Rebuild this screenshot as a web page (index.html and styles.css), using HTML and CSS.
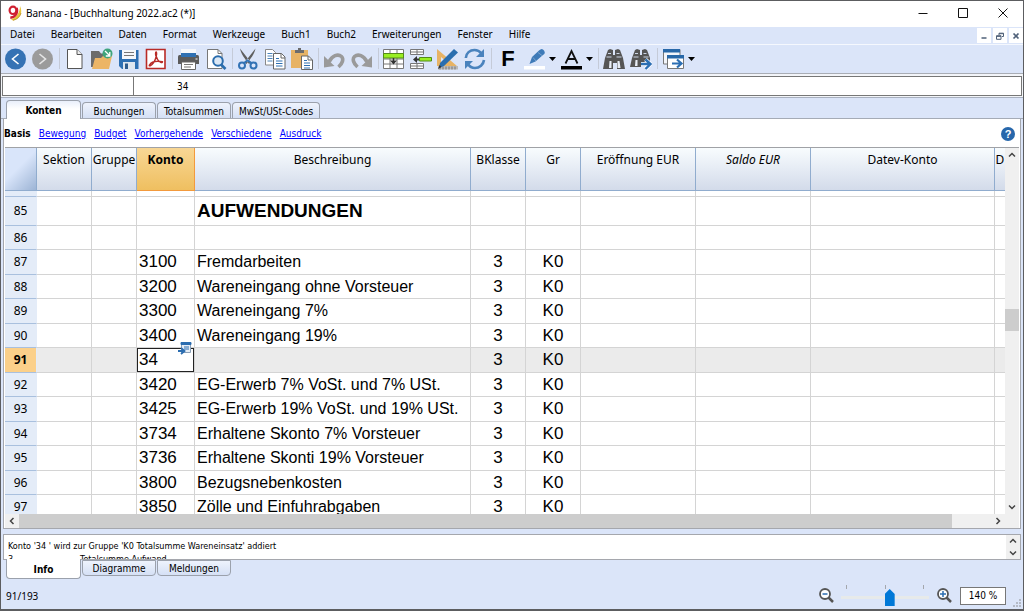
FILE: index.html
```html
<!DOCTYPE html>
<html lang="de">
<head>
<meta charset="utf-8">
<title>Banana - [Buchhaltung 2022.ac2 (*)]</title>
<link rel="stylesheet" href="styles.css">
</head>
<body>
<div class="window">
  <header class="titlebar">
    <svg class="logo" viewBox="0 0 14 16"><path d="M12 1c3 6 .5 12.500-7 14.500l-2-1C9 12 12 7 12 1z" fill="#e8c63c"/><path d="M13 8c-1 4-4 6.500-8 7.300" fill="none" stroke="#b58a1e" stroke-width=".8"/><ellipse cx="5" cy="5.300" rx="3.400" ry="3.700" fill="#fff" stroke="#cf2030" stroke-width="2.200"/><path d="M8.600 3c1.600 4.500-1 9.300-6.300 9.800" fill="none" stroke="#cf2030" stroke-width="2.400"/></svg>
    <h1 class="title">Banana - [Buchhaltung 2022.ac2 (*)]</h1>
    <div class="window-controls">
      <button type="button" aria-label="Minimieren"><svg viewBox="0 0 10 10"><path d="M.5 5.500h9"/></svg></button>
      <button type="button" aria-label="Maximieren"><svg viewBox="0 0 10 10"><path d="M.5.5h9v9h-9z"/></svg></button>
      <button type="button" aria-label="Schliessen"><svg viewBox="0 0 10 10"><path d="M.5.5l9 9M9.500.5l-9 9"/></svg></button>
    </div>
  </header>

  <nav class="menubar">
    <button type="button">Datei</button>
    <button type="button">Bearbeiten</button>
    <button type="button">Daten</button>
    <button type="button">Format</button>
    <button type="button">Werkzeuge</button>
    <button type="button">Buch1</button>
    <button type="button">Buch2</button>
    <button type="button">Erweiterungen</button>
    <button type="button">Fenster</button>
    <button type="button">Hilfe</button>
    <div class="document-controls">
      <button type="button" aria-label="Dokument minimieren"><svg viewBox="0 0 8 8"><path d="M1.500 6h5" stroke-width="1.500"/></svg></button>
      <button type="button" aria-label="Dokument wiederherstellen"><svg viewBox="0 0 8 8"><path d="M3 3V1.200h4.500v3.300H6M3 1.700h4.500M.5 3.700H5v3.600H.5zM.5 4.400H5"/></svg></button>
      <button type="button" aria-label="Dokument schliessen"><svg viewBox="0 0 8 8"><path d="M1.500 1.500l5 5M6.500 1.500l-5 5" stroke-width="1.700"/></svg></button>
    </div>
  </nav>

  <div class="toolbar" role="toolbar">
    <div class="tool-group">
      <button type="button" aria-label="Zurück"><svg viewBox="0 0 22 22"><circle cx="10.500" cy="11" r="10.500" fill="#3572b4"/><path d="M13.500 6l-6 5 6 5" fill="none" stroke="#fff" stroke-width="1.600"/></svg></button>
      <button type="button" aria-label="Vorwärts"><svg viewBox="0 0 22 22"><circle cx="10.500" cy="11" r="10.500" fill="#9b9b9b"/><path d="M7.500 6l6 5-6 5" fill="none" stroke="#e6e6e6" stroke-width="1.600"/></svg></button>
    </div>
    <div class="tool-group">
      <button type="button" aria-label="Neu"><svg viewBox="0 0 22 22"><path d="M3.500 1.500H13l5 5v14H3.500z" fill="#fff" stroke="#555"/><path d="M13 1.500v5h5" fill="#eee" stroke="#555"/></svg></button>
      <button type="button" aria-label="Öffnen"><svg viewBox="0 0 22 22"><path d="M0 19V3h8l2 2.500h7V19z" fill="#6b6b6b"/><path d="M1 21l3-11h6l2-2h9l-3 13z" fill="#ecb566"/><circle cx="16.500" cy="5.500" r="5" fill="#3fa47c"/><path d="M14 3l4.500 4.500M18.800 4v4h-4" stroke="#fff" stroke-width="1.300" fill="none"/></svg></button>
      <button type="button" aria-label="Speichern"><svg viewBox="0 0 22 22"><path d="M1 2h19.500v19H4l-3-3z" fill="#2e70b2"/><path d="M4 2h14v9H4z" fill="#f5f8fb"/><path d="M6 4.500h10M6 7.500h10" stroke="#777"/><path d="M5 14h12v7H5z" fill="#dfe7ef"/><path d="M7 15.500h3V21H7z" fill="#2e5c8c"/></svg></button>
      <button type="button" aria-label="PDF"><svg viewBox="0 0 22 22"><path d="M1.500 1.500h18.500v19H1.500z" fill="#fff" stroke="#b92b27" stroke-width="1.600"/><path d="M4.500 17c2-3.500 6-4.500 13-3.200 0 1.500-3 .5-5-2.500-1.500-2.500-2.300-5-1.800-7 .6-1 1.500.5.5 4-1 4-3.500 8.200-6 9.500-1 .3-1.200-.2-.7-.8z" fill="none" stroke="#b92b27" stroke-width="1.400"/></svg></button>
    </div>
    <div class="tool-group">
      <button type="button" aria-label="Drucken"><svg viewBox="0 0 22 22"><path d="M0 8.500Q0 7 1.500 7h18Q21 7 21 8.500V16H0z" fill="#5b5b5b"/><path d="M3 1h15v8H3z" fill="#f6f8fb"/><path d="M3 5h15v4H3z" fill="#2e70b2"/><path d="M3.500 14h14v7.500h-14z" fill="#fff" stroke="#666"/><path d="M6 16.500h9M6 19h7" stroke="#777"/><path d="M17.500 11h2" stroke="#fff"/></svg></button>
      <button type="button" aria-label="Vorschau"><svg viewBox="0 0 22 22"><path d="M2.500 1.500H13l4 4v15H2.500z" fill="#fff" stroke="#777"/><path d="M13 1.500v4h4" fill="none" stroke="#777"/><circle cx="13" cy="13" r="4.800" fill="#dce8f5" stroke="#2b6dad" stroke-width="2"/><path d="M16 16.500l4.500 4.500" stroke="#2b6dad" stroke-width="2.600"/></svg></button>
    </div>
    <div class="tool-group">
      <button type="button" aria-label="Ausschneiden"><svg viewBox="0 0 22 22"><path d="M3 .5l11 14-2 1.500C8 11 4 6 3 .5zM18.500.5l-11 14 2 1.500c4-5 8-10 9-15.500z" fill="#5f5f5f"/><circle cx="5" cy="17.500" r="3" fill="none" stroke="#3373b5" stroke-width="2"/><circle cx="16.500" cy="17.500" r="3" fill="none" stroke="#3373b5" stroke-width="2"/><path d="M7 15l3.500-2.500L14.500 15" fill="none" stroke="#3373b5" stroke-width="2"/></svg></button>
      <button type="button" aria-label="Kopieren"><svg viewBox="0 0 22 22"><path d="M1.500 1.500h7l3 3V17h-10z" fill="#fff" stroke="#888"/><path d="M3.500 5.500h5M3.500 8h5M3.500 10.500h5M3.500 13h5" stroke="#4d84ba"/><path d="M9.500 5.500h8l3.500 3.500v12H9.500z" fill="#fff" stroke="#666"/><path d="M17 5.500V10h4" fill="none" stroke="#666"/><path d="M12 10.500h3M12 13h6.500M12 15.500h6.500M12 18h6.500" stroke="#2e70b2"/></svg></button>
      <button type="button" aria-label="Einfügen"><svg viewBox="0 0 22 22"><path d="M0 2h17v18H0z" fill="#e7b365"/><path d="M4 5V2h3V0h3v2h3v3z" fill="#6c6c6c"/><path d="M10.500 8h7l4 4v9.500h-11z" fill="#fff" stroke="#666"/><path d="M17 8v4h4" fill="none" stroke="#666"/><path d="M13 12.500h3M13 15h6M13 17.500h6M13 20h6" stroke="#2e70b2"/></svg></button>
    </div>
    <div class="tool-group">
      <button type="button" aria-label="Rückgängig"><svg viewBox="0 0 22 22"><path d="M5 14C8 7.500 14 5.500 17.500 8.500c2.500 2.500 1 7-3 10.500" fill="none" stroke="#9a9a9a" stroke-width="3.600"/><path d="M0 8l0 11.500 10.500-1.500z" fill="#9a9a9a"/></svg></button>
      <button type="button" aria-label="Wiederholen"><svg viewBox="0 0 22 22"><path d="M16 14C13 7.500 7 5.500 3.500 8.500c-2.500 2.500-1 7 3 10.500" fill="none" stroke="#9a9a9a" stroke-width="3.600"/><path d="M21 8l0 11.500-10.500-1.500z" fill="#9a9a9a"/></svg></button>
    </div>
    <div class="tool-group">
      <button type="button" aria-label="Zeilen einfügen"><svg viewBox="0 0 22 22"><path d="M.5 1.500h20v19H.5zM.5 11h20M.5 16h20M7 1.500v19M14 1.500v19" fill="#fff" stroke="#777"/><path d="M.5 5.500h20V10H.5z" fill="#99ee22" stroke="#538c18"/><path d="M10.500 10v4" stroke="#333" stroke-width="1.500"/><path d="M7 12.500h7l-3.500 4z" fill="#333"/></svg></button>
      <button type="button" aria-label="Zeilen hinzufügen"><svg viewBox="0 0 22 22"><path d="M.5 1.500h13v5H.5zM.5 15.500h13v5H.5zM.5 4h13M.5 18h13M7 1.500v5M7 15.500v5" fill="#fff" stroke="#777"/><path d="M9.500 9.500h12v3.500h-12z" fill="#99ee22" stroke="#538c18"/><path d="M3 11.500l4-3.500v2.500h2v2H7V15z" fill="#333"/></svg></button>
      <button type="button" aria-label="Zeichnen"><svg viewBox="0 0 22 22"><path d="M0 1l20 17H0zM4 9v5h6z" fill="#e7b365" fill-rule="evenodd"/><path d="M1 18h20v3.500H1z" fill="#bbb"/><path d="M3 18.500v3M6 18.500v3M9 18.500v3M12 18.500v3M15 18.500v3M18 18.500v3" stroke="#777"/><path d="M17 1l4 3.500L7 18l-5 2 1-5z" fill="#296eaf"/><path d="M1 21l1.500-4 2 2z" fill="#333"/></svg></button>
      <button type="button" aria-label="Neu berechnen"><svg viewBox="0 0 22 22"><path d="M1.800 10C2 5 6 2 10.500 2c3 0 5 1 7 3.500M20 12c-.5 4.500-4.500 8-9 8-3 0-5.500-1.500-7-4" fill="none" stroke="#4a83bd" stroke-width="2.600"/><path d="M20 1v8h-8zM1 21v-8h8z" fill="#4a83bd"/></svg></button>
    </div>
    <div class="tool-group">
      <button type="button" aria-label="Fett" class="bold-tool">F</button>
      <button type="button" aria-label="Hintergrundfarbe" class="split-tool"><svg viewBox="0 0 22 22"><path d="M0 18h21v3.500H0z" fill="#fff"/><path d="M5.500 16L8 9l7-6.500q3-3 5 0T19 7l-7.500 6.500z" fill="#3f7bb8"/><path d="M9 9.500l3 3.500M14 4.500l4 3" stroke="#88abd0" stroke-width=".8"/></svg><svg class="caret" viewBox="0 0 7 4"><path d="M0 0h7L3.500 4z"/></svg></button>
      <button type="button" aria-label="Textfarbe" class="split-tool"><svg viewBox="0 0 22 22"><path d="M0 18h21v3.500H0z" fill="#000"/><path d="M4.500 15.500L10.500 3l6 12.500M6.700 11h7.600" fill="none" stroke="#111" stroke-width="1.800"/></svg><svg class="caret" viewBox="0 0 7 4"><path d="M0 0h7L3.500 4z"/></svg></button>
    </div>
    <div class="tool-group">
      <button type="button" aria-label="Suchen"><svg viewBox="0 0 22 22"><path d="M0 21l2-11 3-8 2-1 3 1v5h2V2l3-1 2 1 3 8 2 11h-8v-6h-4v6z" fill="#555"/><path d="M5 5.500h3M13.500 5.500h3M3.500 9h5M13.500 9h5" stroke="#ccd5e5"/><path d="M6.500 13h2v7H6zM14.500 13h2l1 7h-3z" fill="#e8edf5"/></svg></button>
      <button type="button" aria-label="Weitersuchen"><svg viewBox="0 0 22 22"><path d="M0 19l2-9 3-8 2-1 3 1v5h2V2l3-1 2 1 3 8v5h-9v4z" fill="#555"/><path d="M5 5.500h3M13.500 5.500h3M3.500 9h5M13.500 9h5" stroke="#ccd5e5"/><path d="M5.500 12h2v6H5z" fill="#e8edf5"/><path d="M11 16h9M15.500 11.500l5 4.500-5 5" fill="none" stroke="#fff" stroke-width="4"/><path d="M11 16h9M15.500 11.500l5 4.500-5 5" fill="none" stroke="#2c6fb3" stroke-width="2.400"/></svg></button>
    </div>
    <div class="tool-group">
      <button type="button" aria-label="Fenster wechseln" class="split-tool"><svg viewBox="0 0 22 22"><path d="M.5 1.500H17V16H.5z" fill="#f2f5fa" stroke="#777"/><path d="M0 1h17v3.500H0z" fill="#2868a8"/><path d="M4.500 7.500h16v13h-16z" fill="#fff" stroke="#777"/><path d="M4 7h17v3.500H4z" fill="#2868a8"/><path d="M9 15.500h9M14 11.500l4.500 4-4.500 4" fill="none" stroke="#2c6fb3" stroke-width="2.200"/></svg><svg class="caret" viewBox="0 0 7 4"><path d="M0 0h7L3.500 4z"/></svg></button>
    </div>
  </div>

  <div class="formula-bar">
    <input class="cell-reference" type="text" aria-label="Zelle">
    <input class="cell-content" type="text" aria-label="Inhalt" value="34">
  </div>

  <div class="tabs tabs--top" role="tablist">
    <button type="button" role="tab" aria-selected="true" class="tab tab--active">Konten</button>
    <button type="button" role="tab" class="tab">Buchungen</button>
    <button type="button" role="tab" class="tab">Totalsummen</button>
    <button type="button" role="tab" class="tab tab--wide">MwSt/USt-Codes</button>
  </div>

  <main class="workspace">
    <nav class="views">
      <strong>Basis</strong>
      <a href="#">Bewegung</a>
      <a href="#">Budget</a>
      <a href="#">Vorhergehende</a>
      <a href="#">Verschiedene</a>
      <a href="#">Ausdruck</a>
      <button type="button" class="help" aria-label="Hilfe anzeigen">?</button>
    </nav>
    <div class="sheet-area">
      <div class="sheet-viewport">
        <table class="sheet">
          <colgroup><col class="c-number"><col class="c-small"><col class="c-group"><col class="c-account"><col class="c-text"><col class="c-small"><col class="c-small"><col class="c-amount"><col class="c-amount"><col><col class="c-cut"></colgroup>
          <thead>
            <tr><th class="corner"></th><th>Sektion</th><th>Gruppe</th><th class="current">Konto</th><th>Beschreibung</th><th>BKlasse</th><th>Gr</th><th>Eröffnung EUR</th><th class="computed">Saldo EUR</th><th>Datev-Konto</th><th>D</th></tr>
          </thead>
          <tbody>
            <tr class="row-cut"><th></th><td></td><td></td><td></td><td></td><td></td><td></td><td></td><td></td><td></td><td></td></tr>
            <tr class="row-title"><th>85</th><td></td><td></td><td></td><td>AUFWENDUNGEN</td><td></td><td></td><td></td><td></td><td></td><td></td></tr>
            <tr><th>86</th><td></td><td></td><td></td><td></td><td></td><td></td><td></td><td></td><td></td><td></td></tr>
            <tr><th>87</th><td></td><td></td><td>3100</td><td>Fremdarbeiten</td><td>3</td><td>K0</td><td></td><td></td><td></td><td></td></tr>
            <tr><th>88</th><td></td><td></td><td>3200</td><td>Wareneingang ohne Vorsteuer</td><td>3</td><td>K0</td><td></td><td></td><td></td><td></td></tr>
            <tr><th>89</th><td></td><td></td><td>3300</td><td>Wareneingang 7%</td><td>3</td><td>K0</td><td></td><td></td><td></td><td></td></tr>
            <tr><th>90</th><td></td><td></td><td>3400</td><td>Wareneingang 19%</td><td>3</td><td>K0</td><td></td><td></td><td></td><td></td></tr>
            <tr class="row-current"><th>91</th><td></td><td></td><td class="editing"><input type="text" aria-label="Konto" value="34"><button type="button" class="lookup" aria-label="Auswahlliste"><svg viewBox="0 0 14 13"><path d="M3.500 1.500h9v9h-9z" fill="#e6edf5" stroke="#8aa0b8"/><path d="M3 .5h10v2H3zM6 5h5M6 7h5" fill="#2b6db0" stroke="#2b6db0"/><path d="M0 9h5M3 6l3.500 3L3 12" fill="none" stroke="#2b6db0" stroke-width="1.800"/></svg></button></td><td></td><td>3</td><td>K0</td><td></td><td></td><td></td><td></td></tr>
            <tr><th>92</th><td></td><td></td><td>3420</td><td>EG-Erwerb 7% VoSt. und 7% USt.</td><td>3</td><td>K0</td><td></td><td></td><td></td><td></td></tr>
            <tr><th>93</th><td></td><td></td><td>3425</td><td>EG-Erwerb 19% VoSt. und 19% USt.</td><td>3</td><td>K0</td><td></td><td></td><td></td><td></td></tr>
            <tr><th>94</th><td></td><td></td><td>3734</td><td>Erhaltene Skonto 7% Vorsteuer</td><td>3</td><td>K0</td><td></td><td></td><td></td><td></td></tr>
            <tr><th>95</th><td></td><td></td><td>3736</td><td>Erhaltene Skonti 19% Vorsteuer</td><td>3</td><td>K0</td><td></td><td></td><td></td><td></td></tr>
            <tr><th>96</th><td></td><td></td><td>3800</td><td>Bezugsnebenkosten</td><td>3</td><td>K0</td><td></td><td></td><td></td><td></td></tr>
            <tr><th>97</th><td></td><td></td><td>3850</td><td>Zölle und Einfuhrabgaben</td><td>3</td><td>K0</td><td></td><td></td><td></td><td></td></tr>
          </tbody>
        </table>
      </div>
      <div class="scroll scroll--vertical">
        <button type="button" aria-label="Nach oben"><svg viewBox="0 0 8 8"><path d="M1 5.500l3-3 3 3"/></svg></button>
        <div class="scroll-track"><div class="scroll-thumb"></div></div>
        <button type="button" aria-label="Nach unten"><svg viewBox="0 0 8 8"><path d="M1 2.500l3 3 3-3"/></svg></button>
      </div>
      <div class="scroll scroll--horizontal">
        <button type="button" aria-label="Nach links"><svg viewBox="0 0 8 8"><path d="M5.500 1l-3 3 3 3"/></svg></button>
        <div class="scroll-track"><div class="scroll-thumb"></div></div>
        <button type="button" aria-label="Nach rechts"><svg viewBox="0 0 8 8"><path d="M2.500 1l3 3-3 3"/></svg></button>
      </div>
    </div>
  </main>

  <section class="messages">
    <div class="message-list">
      <p>Konto '34 ' wird zur Gruppe 'K0 Totalsumme Wareneinsatz' addiert</p>
      <p><span class="message-code">3</span>Totalsumme Aufwand</p>
    </div>
    <div class="message-scroll">
      <button type="button" aria-label="Meldung zurück"><svg viewBox="0 0 8 8"><path d="M1 5.500l3-3 3 3"/></svg></button>
      <button type="button" aria-label="Meldung vor"><svg viewBox="0 0 8 8"><path d="M1 2.500l3 3 3-3"/></svg></button>
    </div>
  </section>

  <div class="tabs tabs--bottom" role="tablist">
    <button type="button" role="tab" aria-selected="true" class="tab tab--active">Info</button>
    <button type="button" role="tab" class="tab">Diagramme</button>
    <button type="button" role="tab" class="tab">Meldungen</button>
  </div>

  <footer class="statusbar">
    <span class="position">91/193</span>
    <button type="button" class="zoom-button" aria-label="Verkleinern"><svg viewBox="0 0 15 15"><circle cx="6" cy="6" r="5" fill="#fff" stroke="#555" stroke-width="1.800"/><path d="M9.500 9.500L14 14" stroke="#555" stroke-width="2.500"/><path d="M3.500 6h5" stroke="#2b6db0" stroke-width="1.500"/></svg></button>
    <div class="zoom-slider">
      <div class="ticks"><i></i><i></i><i></i></div>
      <input type="range" min="0" max="100" value="56" aria-label="Zoom">
    </div>
    <button type="button" class="zoom-button" aria-label="Vergrössern"><svg viewBox="0 0 15 15"><circle cx="6" cy="6" r="5" fill="#fff" stroke="#555" stroke-width="1.800"/><path d="M9.500 9.500L14 14" stroke="#555" stroke-width="2.500"/><path d="M3 6h6M6 3v6" stroke="#2b6db0" stroke-width="1.500"/></svg></button>
    <input class="zoom-value" type="text" aria-label="Zoomwert" value="140 %">
    <svg class="grip" viewBox="0 0 8 8"><path d="M6 0h2v2H6zM3 3h2v2H3zM6 3h2v2H6zM0 6h2v2H0zM3 6h2v2H3zM6 6h2v2H6z" fill="#b4bac6"/></svg>
  </footer>
</div>
</body>
</html>
```

FILE: styles.css
```css
* {
  box-sizing: border-box;
}

body {
  margin: 0;
  color: #000;
  font: 10px/14px "DejaVu Sans Condensed", "Noto Sans", sans-serif;
}

button {
  margin: 0;
  padding: 0;
  border: 0;
  background: none;
  color: inherit;
  font: inherit;
}

input {
  margin: 0;
  border: 0;
  border-radius: 0;
  outline: 0;
  font: inherit;
}

svg {
  display: block;
  flex: none;
}

.window {
  display: flex;
  flex-direction: column;
  height: 100vh;
  overflow: hidden;
  border: 1px solid #5c5d60;
  border-bottom-width: 2px;
  background: #dbe5f9;
}

/* Title bar */
.titlebar {
  display: flex;
  align-items: center;
  height: 26px;
  padding: 0 0 2px 7px;
  background: #fff;
}

.logo {
  width: 14px;
  height: 16px;
}

.title {
  margin: 0 auto 0 4px;
  font: 10px/16px "Noto Sans", sans-serif;
}

.window-controls {
  display: flex;
}

.window-controls button {
  display: grid;
  place-items: center;
  width: 40px;
  height: 24px;
}

.window-controls svg {
  width: 10px;
  height: 10px;
  fill: none;
  stroke: #111;
}

/* Menu */
.menubar {
  display: flex;
  align-items: flex-start;
  gap: 16px;
  height: 17px;
  padding-left: 9px;
  font: 10px/14px "Noto Sans", sans-serif;
}

.document-controls {
  display: flex;
  gap: 2px;
  margin-left: auto;
  padding-top: 1px;
}

.document-controls button {
  display: grid;
  place-items: center;
  width: 14px;
  height: 15px;
  background: #fff;
}

.document-controls svg {
  width: 8px;
  height: 8px;
  fill: none;
  stroke: #4f6078;
}

/* Toolbar */
.toolbar {
  display: flex;
  gap: 5px;
  height: 30px;
  padding: 3px 4px 4px;
  border-top: 1px solid #f5f8fe;
  border-bottom: 1px solid #a9adb5;
}

.tool-group {
  display: flex;
  gap: 5px;
  padding-left: 4px;
  border-left: 1px solid #c5cbd8;
}

.tool-group:nth-child(odd) {
  padding-left: 5px;
}

.tool-group:first-child {
  padding-left: 0;
  border-left: 0;
}

.tool-group svg {
  width: 22px;
  height: 22px;
}

.bold-tool {
  width: 22px;
  font: bold 22px/22px "Liberation Sans", sans-serif;
}

.split-tool {
  display: flex;
  align-items: center;
  gap: 3px;
}

.tool-group .caret {
  width: 7px;
  height: 4px;
}

/* Formula bar */
.formula-bar {
  display: flex;
  height: 24px;
  padding: 2px 1px 1px;
  border-bottom: 1px solid #a9b1c0;
  background: #f3f5f9;
}

.formula-bar input {
  border: 1px solid #777;
  background: #fff;
}

.cell-reference {
  width: 132px;
}

.cell-content {
  flex: 1;
  min-width: 0;
  margin-left: -1px;
  padding: 1px 0 0 43px;
}

/* Tabs */
.tabs {
  display: flex;
  gap: 1px;
  padding-left: 5px;
}

.tab {
  width: 74px;
  height: 16px;
  border: 1px solid #9ba1ac;
  background: linear-gradient(#eef3fd, #d5e0f5);
  line-height: 14px;
}

.tab--active {
  width: 75px;
  background: #fff;
  font-weight: bold;
}

.tab--wide {
  width: 88px;
}

.tabs--top {
  align-items: flex-end;
  height: 21px;
  border-bottom: 1px solid #a5abb6;
}

.tabs--top .tab {
  padding-top: 2px;
  border-bottom: 0;
  border-radius: 4px 4px 0 0;
}

.tabs--top .tab--active {
  height: 19px;
  margin-bottom: -1px;
  background: linear-gradient(#e9effb, #fff 8px);
}

.tabs--bottom {
  align-items: flex-start;
  height: 20px;
}

.tabs--bottom .tab {
  padding-top: 1px;
  border-radius: 0 0 4px 4px;
}

.tabs--bottom .tab--active {
  position: relative;
  height: 20px;
  margin-top: -1px;
  padding-top: 3px;
  border-top: 0;
}

/* Workspace */
.workspace {
  display: flex;
  flex: 1;
  flex-direction: column;
  min-height: 0;
  margin: 0 2px 5px;
  border: 1px solid #a5a7ad;
  border-top: 0;
  background: #fff;
}

.views {
  display: flex;
  align-items: center;
  gap: 8px;
  height: 28px;
  padding: 2px 5px 0 0;
}

.views a {
  color: #00f;
}

.help {
  width: 14px;
  height: 14px;
  margin-left: auto;
  border-radius: 50%;
  background: #2767ab;
  color: #fff;
  font: bold 11px/14px "Liberation Sans", sans-serif;
}

.sheet-area {
  display: grid;
  flex: 1;
  grid-template: minmax(0, 1fr) 14px / minmax(0, 1fr) 14px;
  min-height: 0;
  margin: 0 1px;
  border-top: 1px solid #a0a2a6;
}

.sheet-viewport {
  overflow: hidden;
}

.sheet {
  width: 100%;
  table-layout: fixed;
  border-collapse: separate;
  border-spacing: 0;
  font: 17px/20px "Liberation Sans", sans-serif;
}

.c-number {
  width: 32px;
}

.c-small {
  width: 55px;
}

.c-group {
  width: 45px;
}

.c-account {
  width: 58px;
}

.c-text {
  width: 276px;
}

.c-amount {
  width: 115px;
}

.c-cut {
  width: 10px;
}

.sheet th,
.sheet td {
  height: 24px;
  padding: 0 0 0 2px;
  overflow: hidden;
  border-right: 1px solid #d4d4d4;
  border-bottom: 1px solid #d4d4d4;
  text-align: left;
  white-space: nowrap;
}

.sheet td:nth-child(5) {
  font-size: 16px;
}

.sheet th {
  padding: 0;
  font: 12px/18px "Noto Sans", sans-serif;
  text-align: center;
}

.sheet thead th {
  height: 43px;
  padding-top: 3px;
  border-color: #90acce;
  background: linear-gradient(#f8fcfe, #d3dbea);
  vertical-align: top;
}

.sheet thead .corner {
  background: linear-gradient(135deg, #d9e5fa 45%, #9db4d5);
}

.sheet thead .current {
  border-color: #f39a3c;
  background: linear-gradient(#f8d795, #efbf60);
  font-weight: bold;
}

.sheet thead .computed {
  font-style: italic;
}

.sheet th:last-child,
.sheet td:last-child {
  border-right: 0;
}

.sheet tbody th {
  border-color: #a9c0de;
  border-right-color: #e4ecf8;
  background: #e4ecf8;
}

.sheet tbody tr:nth-child(even) > * {
  height: 25px;
}

.sheet tbody tr.row-cut > * {
  height: 6px;
}

.sheet tbody tr.row-title > * {
  height: 29px;
}

.sheet .row-title td:nth-child(5) {
  font-size: 19px;
  font-weight: bold;
}

.sheet td:nth-child(6),
.sheet td:nth-child(7) {
  padding: 0;
  text-align: center;
}

.row-current td {
  background: #ebebeb;
}

.sheet .row-current th {
  background: #fbd08a;
  font-weight: bold;
}

.sheet .editing {
  position: relative;
  padding: 0;
  overflow: visible;
}

.editing input {
  display: block;
  width: 100%;
  height: 24px;
  padding: 0 0 0 1px;
  border: 1px solid #222;
}

.lookup {
  position: absolute;
  top: -6px;
  right: 2px;
}

.lookup svg {
  width: 14px;
  height: 13px;
}

/* Scroll bars */
.scroll {
  display: flex;
  background: #f0f0f0;
}

.scroll--vertical {
  flex-direction: column;
}

.scroll--horizontal {
  grid-column: 1 / -1;
  padding-right: 14px;
}

.scroll button,
.message-scroll button {
  display: grid;
  flex: none;
  place-items: center;
  width: 14px;
  height: 14px;
}

.scroll svg,
.message-scroll svg {
  width: 8px;
  height: 8px;
  fill: none;
  stroke: #444;
  stroke-width: 1.5;
}

.scroll-track {
  display: flex;
  flex: 1;
}

.scroll-thumb {
  background: #cdcdcd;
}

.scroll--vertical .scroll-track {
  flex-direction: column;
  padding-top: 147px;
}

.scroll--vertical .scroll-thumb {
  height: 22px;
}

.scroll--horizontal .scroll-thumb {
  width: 96%;
}

/* Messages */
.messages {
  display: flex;
  height: 26px;
  margin: 0 2px;
  border: 1px solid #a5a7ad;
  background: #fff;
}

.message-list {
  flex: 1;
  padding: 5px 4px 0;
  overflow: hidden;
  font-size: 9px;
}

.message-list p {
  margin: 0;
  line-height: 13px;
  white-space: pre;
}

.message-code {
  display: inline-block;
  width: 72px;
}

.message-scroll {
  width: 14px;
  background: #f0f0f0;
}

.message-scroll button {
  height: 12px;
}

/* Status bar */
.statusbar {
  display: flex;
  align-items: center;
  height: 29px;
  padding: 2px 2px 0 5px;
}

.position {
  margin-right: auto;
  font: 10px/14px "Noto Sans", sans-serif;
}

.zoom-button svg {
  width: 15px;
  height: 15px;
}

.zoom-slider {
  width: 88px;
  height: 21px;
  margin: 0 8px 0 7px;
}

.ticks {
  display: flex;
  justify-content: space-between;
  height: 4px;
  padding: 0 5px;
}

.ticks i {
  width: 1px;
  background: #a4a7ad;
}

.zoom-slider input {
  display: block;
  width: 100%;
  height: 17px;
  appearance: none;
  background: linear-gradient(#e7eaea, #e7eaea) center / 100% 3px no-repeat;
}

.zoom-slider input::-webkit-slider-thumb {
  width: 10px;
  height: 17px;
  appearance: none;
  background: #0078d7;
  clip-path: polygon(0 5px, 50% 0, 100% 5px, 100% 100%, 0 100%);
}

.zoom-value {
  width: 46px;
  height: 18px;
  margin: 0 7px 0 8px;
  border: 1px solid #777;
  background: #fff;
  text-align: center;
}

.grip {
  align-self: flex-end;
  width: 8px;
  height: 8px;
  margin-bottom: 2px;
}
```
